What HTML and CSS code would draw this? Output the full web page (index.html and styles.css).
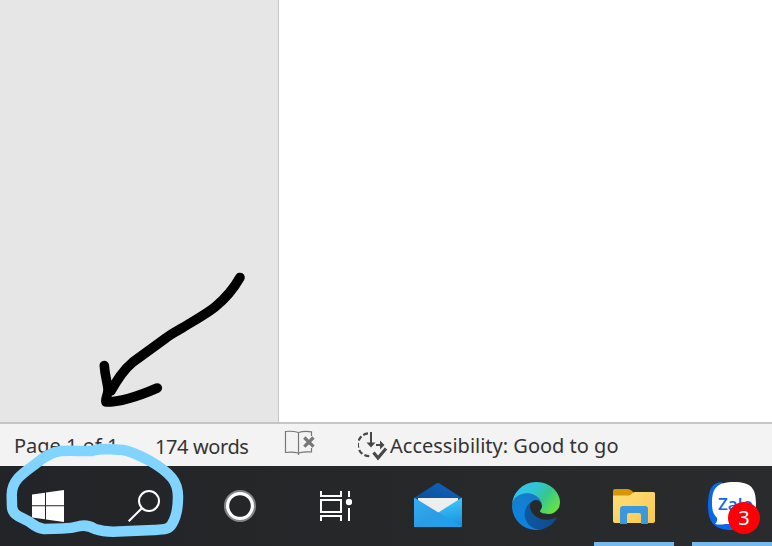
FILE: index.html
```html
<!DOCTYPE html>
<html lang="en">
    <head>
        <meta charset="utf-8">
        <title>Document</title>
        <link rel="stylesheet" href="styles.css">
    </head>
    <body>
        <div class="workspace">
            <div class="gutter"></div>
            <div class="page"></div>
        </div>

        <div class="statusbar">
            <span class="status page_count">Page 1 of 1</span>
            <span class="status word_count">174 words</span>
            <svg class="proofing" width="32" height="26" viewBox="0 0 32 26" fill="none" stroke="#777">
                <path d="M27.5 6V1.8Q20 .7 14.5 2.5Q8 .7 1.5 1.5V22.5Q8 21.5 14.5 23Q20 21.5 27.5 22V18M14.5 2V25" stroke-width="1.2"/>
                <path d="M20.3 7.5L29.5 16.7M29.5 7.5L20.3 16.7" stroke-width="3.2"/>
            </svg>
            <svg class="access_icon" width="30" height="30" viewBox="0 0 30 30" fill="none" stroke="#484848">
                <path d="M10 2.4A11.3 11.3 0 0 0 12.500 25" stroke-width="2.2" stroke-dasharray="5 2.3"/>
                <path d="M13 1V14M18 14H23" stroke-width="2"/>
                <path d="M8.5 11.5H17.5L13 16.5zM22 9.5V18.5L26.5 14z" fill="#484848" stroke="none"/>
                <path d="M15.5 21.5L20 27L28 17.5" stroke-width="3.2"/>
            </svg>
            <span class="status access">Accessibility: Good to go</span>
        </div>

        <div class="taskbar">
            <div class="task">
                <svg width="32" height="32" viewBox="0 0 32 32" fill="#fff">
                    <path d="M0 4.5L13 2.700V15.300H0zM14 2.500L32 0V15.300H14zM0 16.300H13V29.200L0 27.500zM14 16.300H32V32L14 29.400z"/>
                </svg>
            </div>
            <div class="task">
                <svg width="32" height="32" viewBox="0 0 32 32" fill="none" stroke="#fff" stroke-width="2">
                    <circle cx="21" cy="11" r="10"/>
                    <path d="M13.8 18.2L.7 31.3"/>
                </svg>
            </div>
            <div class="task">
                <svg width="32" height="32" viewBox="0 0 32 32" fill="none">
                    <circle cx="16" cy="16" r="14.8" stroke="#858585" stroke-width="2.4"/>
                    <circle cx="16" cy="16" r="12.4" stroke="#fff" stroke-width="3.2"/>
                </svg>
            </div>
            <div class="task">
                <svg width="32" height="32" viewBox="0 0 32 32" fill="none" stroke="#fff" stroke-width="2">
                    <path d="M1 1V6H21V1M1 10H21V22H1zM1 31V26H21V31M29 1V7M29 18V31"/>
                    <circle cx="29" cy="12" r="3.2" fill="#fff" stroke="none"/>
                </svg>
            </div>
            <div class="task app">
                <svg width="48" height="48" viewBox="0 0 48 48">
                    <defs>
                        <linearGradient id="flap" x1="0" y1="1" x2="1" y2="0"><stop stop-color="#0a4a99"/><stop offset="1" stop-color="#1068bf"/></linearGradient>
                        <linearGradient id="mail_left" x1="0" y1="0" x2="1" y2="1"><stop stop-color="#36aef0"/><stop offset=".5" stop-color="#2b9de6"/><stop offset="1" stop-color="#1ba2ee"/></linearGradient>
                        <linearGradient id="mail_right" x1=".7" y1="0" x2=".9" y2="1"><stop stop-color="#40c9f7"/><stop offset="1" stop-color="#168fdf"/></linearGradient>
                    </defs>
                    <path d="M0 16L22 1.7Q24 .5 26 1.7L48 16V19H0z" fill="url(#flap)"/>
                    <path d="M4 16H44V24L24 34L4 24z" fill="#eee"/>
                    <path d="M48 15.5V45L14 37z" fill="url(#mail_right)"/>
                    <path d="M0 15.5L48 45H0z" fill="url(#mail_left)"/>
                </svg>
            </div>
            <div class="task app">
                <svg width="48" height="48" viewBox="0 0 256 256">
                    <defs>
                        <linearGradient id="edge_dark" x1="0" x2="1"><stop stop-color="#0c59a4"/><stop offset="1" stop-color="#114a8b"/></linearGradient>
                        <linearGradient id="edge_blue" x1=".8" y1="0" x2=".3" y2="1"><stop stop-color="#1278c5"/><stop offset=".4" stop-color="#147fd2"/><stop offset="1" stop-color="#0a84e0"/></linearGradient>
                        <linearGradient id="edge_green" x1="0" y1=".15" x2="1" y2=".7"><stop stop-color="#35c1f1"/><stop offset=".4" stop-color="#2fc6d4"/><stop offset=".65" stop-color="#36c78f"/><stop offset="1" stop-color="#66e343"/></linearGradient>
                    </defs>
                    <g transform="translate(-4.63 -4.92)">
                        <path fill="url(#edge_dark)" d="M235.68 195.49a93.73 93.73 0 0 1-10.54 4.71 101.87 101.87 0 0 1-35.9 6.46c-47.32 0-88.54-32.55-88.54-74.32A31.48 31.48 0 0 1 117.13 105c-42.8 1.8-53.8 46.4-53.8 72.53 0 73.88 68.09 81.37 82.76 81.37 7.91 0 19.84-2.3 27-4.56l1.31-.44a128.34 128.34 0 0 0 66.6-52.8 4 4 0 0 0-5.32-5.61z"/>
                        <path fill="url(#edge_blue)" d="M110.34 246.34A79.2 79.2 0 0 1 87.6 225a80.72 80.72 0 0 1 29.53-120c3.12-1.47 8.45-4.13 15.54-4a32.35 32.35 0 0 1 25.69 13 31.88 31.88 0 0 1 6.36 18.66c0-.21 24.46-79.6-80-79.6-43.9 0-80 41.66-80 78.21a130.15 130.15 0 0 0 12.11 56 128 128 0 0 0 156.38 67.11 75.55 75.55 0 0 1-62.78-8z"/>
                        <path fill="url(#edge_green)" d="M156.94 153.78c-.81 1.05-3.3 2.5-3.3 5.66 0 2.61 1.7 5.12 4.72 7.23 14.38 10 41.49 8.68 41.56 8.68a59.56 59.56 0 0 0 30.27-8.35 61.38 61.38 0 0 0 30.43-52.88c.26-22.41-8-37.31-11.34-43.91C228.09 28.76 182.35 4.92 132.61 4.92a128 128 0 0 0-128 126.2c.48-36.54 36.8-66.05 80-66.05 3.5 0 23.46.34 42 10.07 16.34 8.58 24.9 18.94 30.85 29.21 6.18 10.67 7.28 24.15 7.28 29.52s-2.74 13.33-7.8 19.91z"/>
                    </g>
                </svg>
            </div>
            <div class="task app running">
                <svg width="48" height="48" viewBox="0 0 48 48">
                    <defs>
                        <linearGradient id="folder" x1="0" y1="0" x2="1" y2="1"><stop stop-color="#ffdf78"/><stop offset="1" stop-color="#f9c84e"/></linearGradient>
                    </defs>
                    <path d="M3 9Q3 7 5 7H17.5Q20 7 21.500 8.500L23 10V16H3z" fill="#d69608"/>
                    <path d="M3 13.5H18.5Q20 13.5 21.500 12L23 10.500Q23.600 10 25 10H43.500Q45 10 45 11.500V39Q45 41 43 41H5Q3 41 3 39z" fill="url(#folder)"/>
                    <path d="M10 42V27Q10 24 13 24H35Q38 24 38 27V42H31V33Q31 31 29 31H19Q17 31 17 33V42z" fill="#3b98dc"/>
                </svg>
            </div>
            <div class="task app running">
                <div class="zalo">
                    <svg width="48" height="48" viewBox="0 0 48 48">
                        <path d="M13 0C3 1 0 9 0 24C0 41 7 48 24 48C41 48 48 41 48 24z" fill="#0767ee"/>
                        <path d="M26 0C43 0 48 6 48 22C48 38 42 42 26 42H17Q12 43 7 42Q10 39 9 36C5 32 4 28 4 21C4 6 9 0 26 0z" fill="#fff"/>
                    </svg>
                    <span class="zalo_name">Zalo</span>
                    <span class="badge">3</span>
                </div>
            </div>
        </div>

        <!-- pen marks on top of everything -->
        <svg class="ink" width="772" height="546" viewBox="0 0 772 546" fill="none" stroke-linecap="round" stroke-linejoin="round">
            <path d="M240 277.5C234 288 226 298 215 307C205 315 193 321 183 327.500C177 331 171 334 166 338L133 362C122 371 116 382 111 391M104.300 365.500C105 377 108 384 108 390C108 395 105 399 106 402C122 402 139 396 157.300 388" stroke="#000" stroke-width="9.600"/>
            <path d="M11.7 495C11.7 480 23 473 36.700 463C44 457 51 452 61 451C72 450 84 451.500 92 451C97 449 101 449 107 449L123 450C134 452 142 457 150 461C159 466 167 472 172 478C177 484 178 490 178 497C178 507 177 516 172 524C169 529.500 164 529.500 154 530L118 531.500C109 532 101 531 95 529C90 526 85 525 80 526C73 528 69 528.500 62 528.500L44 529C34 528 32 522 26 520C18 516 12 514 12 506Z" stroke="#80d4ff" stroke-width="10.500"/>
        </svg>
    </body>
</html>
```
FILE: styles.css
```css
* {
    box-sizing: border-box;
}
body {
    margin: 0;
    width: 772px;
    height: 546px;
    overflow: hidden;
    position: relative;
    font-family: "Noto Sans", "Open Sans", sans-serif;
}
svg {
    display: block;
    flex: none;
}
.workspace {
    display: flex;
    height: 422px;
}
.gutter {
    width: 279px;
    background-color: #e6e6e6;
    border-right: 1px solid #c8c8c8;
}
.page {
    flex: 1;
    background-color: white;
}
.statusbar {
    display: flex;
    align-items: center;
    height: 44px;
    padding-left: 14px;
    background-color: #f3f3f3;
    border-top: 2px solid #c5c5c5;
}
.status {
    font-size: 20px;
    line-height: 42px;
    padding-top: 1px;
    color: #333;
    white-space: nowrap;
}
.page_count {
    width: 141px;
}
.word_count {
    width: 129px;
    padding-top: 3px;
    letter-spacing: -0.4px;
}
.proofing {
    margin-bottom: 4px;
}
.access_icon {
    margin-left: 42px;
    margin-right: 2px;
    margin-top: 2px;
}
.taskbar {
    display: flex;
    height: 80px;
    background-color: #28292b;
    background-image: linear-gradient(to right, #232427, #2a2b2c);
}
.task {
    display: flex;
    flex: none;
    width: 96px;
    align-items: center;
    justify-content: center;
}
.app {
    width: 98px;
}
.task:nth-child(5) {
    margin-left: 5px;
}
.running {
    /* 4px strip under open apps */
    background: linear-gradient(#76b9ed, #76b9ed) 9px 76px / 80px 4px no-repeat;
}
.zalo {
    position: relative;
    width: 48px;
    height: 48px;
}
.zalo_name {
    position: absolute;
    left: 10px;
    top: 12px;
    font: 600 17px/20px "Open Sans", sans-serif;
    color: #0767ee;
}
.badge {
    position: absolute;
    left: 20px;
    top: 20px;
    width: 32px;
    height: 32px;
    border-radius: 50%;
    background-color: #fb0007;
    color: white;
    font-size: 20px;
    line-height: 32px;
    text-align: center;
}
.ink {
    position: absolute;
    top: 0;
    left: 0;
    pointer-events: none;
}
```
